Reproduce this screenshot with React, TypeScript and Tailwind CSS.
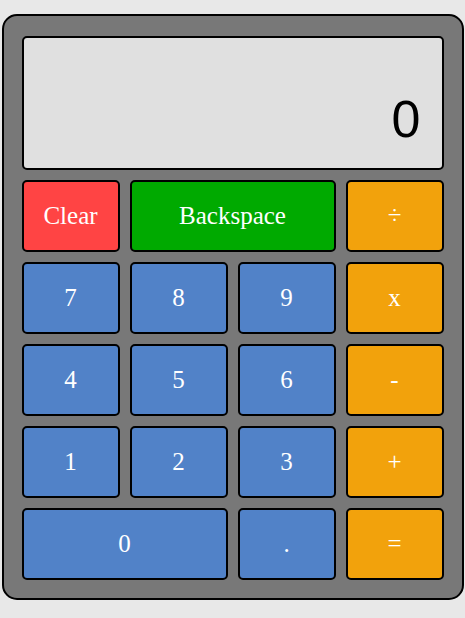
const keys: { label: string; tone: 'red' | 'green' | 'orange' | 'blue'; span?: string }[] = [
  { label: 'Clear', tone: 'red' },
  { label: 'Backspace', tone: 'green', span: 'col-span-2' },
  { label: '÷', tone: 'orange' },
  { label: '7', tone: 'blue' },
  { label: '8', tone: 'blue' },
  { label: '9', tone: 'blue' },
  { label: 'x', tone: 'orange' },
  { label: '4', tone: 'blue' },
  { label: '5', tone: 'blue' },
  { label: '6', tone: 'blue' },
  { label: '-', tone: 'orange' },
  { label: '1', tone: 'blue' },
  { label: '2', tone: 'blue' },
  { label: '3', tone: 'blue' },
  { label: '+', tone: 'orange' },
  { label: '0', tone: 'blue', span: 'col-span-2' },
  { label: '.', tone: 'blue' },
  { label: '=', tone: 'orange' },
];

const toneClass = {
  red: 'bg-[#ff4444]',
  green: 'bg-[#00aa00]',
  orange: 'bg-[#f2a20c]',
  blue: 'bg-[#5182c8]',
};

export default function App() {
  return (
    <div className="min-h-[618px] bg-[#e8e8e8] pt-[14px] font-['Liberation_Serif',serif]">
      <div className="mx-auto w-[462px] rounded-[15px] border-2 border-black bg-[#787878] px-[18px] pt-[20px] pb-[18px]">
        <div className="flex h-[134px] items-end justify-end rounded-[5px] border-2 border-black bg-[#e0e0e0] pr-[21px] pb-[23px]">
          <span className="font-['Liberation_Sans',sans-serif] text-[52px] leading-none text-black">0</span>
        </div>
        <div className="mt-[10px] grid grid-cols-4 gap-[10px]">
          {keys.map((k) => (
            <button
              key={k.label}
              className={`${k.span ?? ''} ${toneClass[k.tone]} flex h-[72px] items-center justify-center rounded-[5px] border-2 border-black text-[25px] text-white`}
            >
              {k.label}
            </button>
          ))}
        </div>
      </div>
    </div>
  );
}
